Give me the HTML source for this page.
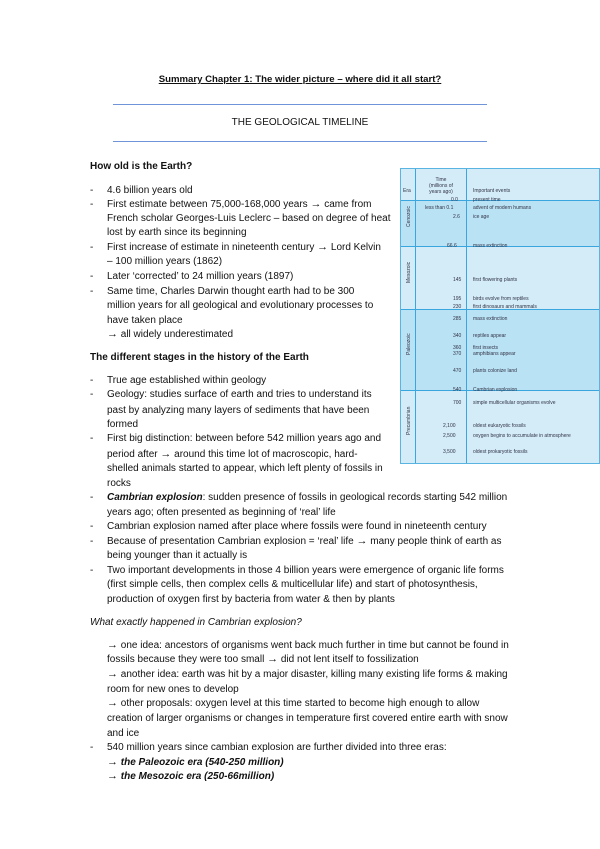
<!DOCTYPE html>
<html><head><meta charset="utf-8"><style>
body{margin:0;background:#fff;}
#p{position:relative;width:600px;height:849px;overflow:hidden;font-family:"Liberation Sans",sans-serif;font-size:10px;color:#111;}
.l{position:absolute;left:107px;white-space:nowrap;line-height:14px;}
.d{position:absolute;left:90px;line-height:14px;}
.b{font-weight:bold;}
.a{font-size:11px;line-height:0;}
.h{position:absolute;left:90px;font-weight:bold;line-height:14px;white-space:nowrap;}
.hr{position:absolute;left:113px;width:374px;height:1px;background:#6f95d8;}
#img{position:absolute;left:400px;top:168px;width:200px;height:296px;background:#d3ecf8;border:1px solid #5ab4e2;box-sizing:border-box;font-size:5px;color:#334;}
#img .band{position:absolute;left:0;right:0;}
#img .v{position:absolute;top:0;bottom:0;width:1px;background:#3aa6e0;}
#img .hl{position:absolute;left:0;right:0;height:1px;background:#3aa6e0;}
#img .t{position:absolute;white-space:nowrap;line-height:6px;}
#img .era{position:absolute;left:1px;width:14px;transform:rotate(-90deg);text-align:center;white-space:nowrap;}
</style></head><body><div id="p">
<div style="position:absolute;left:0;right:0;top:73px;text-align:center;font-weight:bold;text-decoration:underline;line-height:14px;font-size:9.6px">Summary Chapter 1: The wider picture – where did it all start?</div>
<div class="hr" style="top:104px"></div>
<div style="position:absolute;left:0;right:0;top:116px;text-align:center;line-height:14px;">THE GEOLOGICAL TIMELINE</div>
<div class="hr" style="top:141px"></div>

<div class="h" style="top:160px">How old is the Earth?</div>
<div class="d" style="top:184px">-</div><div class="l" style="top:184px">4.6 billion years old</div>
<div class="d" style="top:198px">-</div><div class="l" style="top:198px">First estimate between 75,000-168,000 years <span class="a">→</span> came from</div>
<div class="l" style="top:212px">French scholar Georges-Luis Leclerc – based on degree of heat</div>
<div class="l" style="top:226px">lost by earth since its beginning</div>
<div class="d" style="top:241px">-</div><div class="l" style="top:241px">First increase of estimate in nineteenth century <span class="a">→</span> Lord Kelvin</div>
<div class="l" style="top:255px">– 100 million years (1862)</div>
<div class="d" style="top:270px">-</div><div class="l" style="top:270px">Later ‘corrected’ to 24 million years (1897)</div>
<div class="d" style="top:285px">-</div><div class="l" style="top:285px">Same time, Charles Darwin thought earth had to be 300</div>
<div class="l" style="top:299px">million years for all geological and evolutionary processes to</div>
<div class="l" style="top:314px">have taken place</div>
<div class="l" style="top:328px"><span class="a">→</span> all widely underestimated</div>

<div class="h" style="top:351px">The different stages in the history of the Earth</div>
<div class="d" style="top:374px">-</div><div class="l" style="top:374px">True age established within geology</div>
<div class="d" style="top:388px">-</div><div class="l" style="top:388px">Geology: studies surface of earth and tries to understand its</div>
<div class="l" style="top:404px">past by analyzing many layers of sediments that have been</div>
<div class="l" style="top:418px">formed</div>
<div class="d" style="top:432px">-</div><div class="l" style="top:432px">First big distinction: between before 542 million years ago and</div>
<div class="l" style="top:448px">period after <span class="a">→</span> around this time lot of macroscopic, hard-</div>
<div class="l" style="top:462px">shelled animals started to appear, which left plenty of fossils in</div>
<div class="l" style="top:477px">rocks</div>
<div class="d" style="top:491px">-</div><div class="l" style="top:491px"><b><i>Cambrian explosion</i></b>: sudden presence of fossils in geological records starting 542 million</div>
<div class="l" style="top:506px">years ago; often presented as beginning of ‘real’ life</div>
<div class="d" style="top:520px">-</div><div class="l" style="top:520px">Cambrian explosion named after place where fossils were found in nineteenth century</div>
<div class="d" style="top:535px">-</div><div class="l" style="top:535px">Because of presentation Cambrian explosion = ‘real’ life <span class="a">→</span> many people think of earth as</div>
<div class="l" style="top:549px">being younger than it actually is</div>
<div class="d" style="top:564px">-</div><div class="l" style="top:564px">Two important developments in those 4 billion years were emergence of organic life forms</div>
<div class="l" style="top:578px">(first simple cells, then complex cells &amp; multicellular life) and start of photosynthesis,</div>
<div class="l" style="top:593px">production of oxygen first by bacteria from water &amp; then by plants</div>

<div class="h" style="top:616px;font-weight:normal;font-style:italic">What exactly happened in Cambrian explosion?</div>
<div class="l" style="top:639px"><span class="a">→</span> one idea: ancestors of organisms went back much further in time but cannot be found in</div>
<div class="l" style="top:653px">fossils because they were too small <span class="a">→</span> did not lent itself to fossilization</div>
<div class="l" style="top:668px"><span class="a">→</span> another idea: earth was hit by a major disaster, killing many existing life forms &amp; making</div>
<div class="l" style="top:683px">room for new ones to develop</div>
<div class="l" style="top:697px"><span class="a">→</span> other proposals: oxygen level at this time started to become high enough to allow</div>
<div class="l" style="top:712px">creation of larger organisms or changes in temperature first covered entire earth with snow</div>
<div class="l" style="top:727px">and ice</div>
<div class="d" style="top:741px">-</div><div class="l" style="top:741px">540 million years since cambian explosion are further divided into three eras:</div>
<div class="l b" style="top:756px;font-style:italic"><span class="a">→</span> the Paleozoic era (540-250 million)</div>
<div class="l b" style="top:770px;font-style:italic"><span class="a">→</span> the Mesozoic era (250-66million)</div>

<div id="img">
<div class="band" style="top:31px;height:46px;background:#b9e2f5"></div>
<div class="band" style="top:140px;height:81px;background:#b9e2f5"></div>
<div class="hl" style="top:31px"></div>
<div class="hl" style="top:77px"></div>
<div class="hl" style="top:140px"></div>
<div class="hl" style="top:221px"></div>
<div class="v" style="left:14px"></div>
<div class="v" style="left:65px"></div>
<div class="t" style="left:2px;top:19px">Era</div>
<div class="t" style="left:28px;top:8px;text-align:center">Time<br>(millions of<br>years ago)</div>
<div class="t" style="left:72px;top:19px">Important events</div>
<div class="era" style="top:48px">Cenozoic</div>
<div class="era" style="top:104px">Mesozoic</div>
<div class="era" style="top:176px">Paleozoic</div>
<div class="era" style="top:256px">Precambrian</div>
<div class="t" style="left:50px;top:28px">0.0</div><div class="t" style="left:72px;top:28px">present time</div>
<div class="t" style="left:24px;top:36px">less than 0.1</div><div class="t" style="left:72px;top:36px">advent of modern humans</div>
<div class="t" style="left:52px;top:45px">2.6</div><div class="t" style="left:72px;top:45px">ice age</div>
<div class="t" style="left:46px;top:74px">66.6</div><div class="t" style="left:72px;top:74px">mass extinction</div>
<div class="t" style="left:52px;top:108px">145</div><div class="t" style="left:72px;top:108px">first flowering plants</div>
<div class="t" style="left:52px;top:127px">195</div><div class="t" style="left:72px;top:127px">birds evolve from reptiles</div>
<div class="t" style="left:52px;top:135px">230</div><div class="t" style="left:72px;top:135px">first dinosaurs and mammals</div>
<div class="t" style="left:52px;top:147px">285</div><div class="t" style="left:72px;top:147px">mass extinction</div>
<div class="t" style="left:52px;top:164px">340</div><div class="t" style="left:72px;top:164px">reptiles appear</div>
<div class="t" style="left:52px;top:176px">360</div><div class="t" style="left:72px;top:176px">first insects</div>
<div class="t" style="left:52px;top:182px">370</div><div class="t" style="left:72px;top:182px">amphibians appear</div>
<div class="t" style="left:52px;top:199px">470</div><div class="t" style="left:72px;top:199px">plants colonize land</div>
<div class="t" style="left:52px;top:218px">540</div><div class="t" style="left:72px;top:218px">Cambrian explosion</div>
<div class="t" style="left:52px;top:231px">700</div><div class="t" style="left:72px;top:231px">simple multicellular organisms evolve</div>
<div class="t" style="left:42px;top:254px">2,100</div><div class="t" style="left:72px;top:254px">oldest eukaryotic fossils</div>
<div class="t" style="left:42px;top:264px">2,500</div><div class="t" style="left:72px;top:264px">oxygen begins to accumulate in atmosphere</div>
<div class="t" style="left:42px;top:280px">3,500</div><div class="t" style="left:72px;top:280px">oldest prokaryotic fossils</div>
</div>
</div></body></html>
